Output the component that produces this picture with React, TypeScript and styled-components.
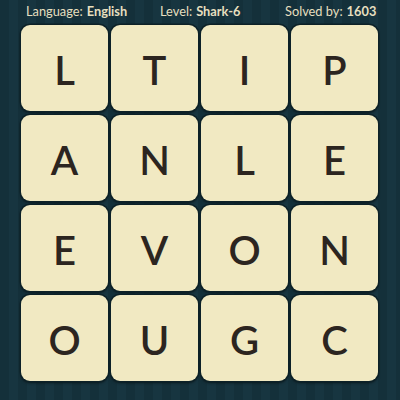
import React from "react";
import styled, { createGlobalStyle } from "styled-components";

const Global = createGlobalStyle`
  html, body { margin: 0; padding: 0; }
  body {
    width: 400px;
    height: 400px;
    overflow: hidden;
    background-color: #14303a;
    background-image: repeating-linear-gradient(
      90deg,
      #14303a 0px,
      #14303a 9px,
      #173540 9px,
      #173540 18px
    );
    font-family: Lato, "Open Sans", sans-serif;
  }
`;

const Page = styled.div`
  width: 400px;
  height: 400px;
  display: flex;
  flex-direction: column;
`;

const Header = styled.div`
  height: 25px;
  display: grid;
  grid-template-columns: 134px 125px 1fr;
  align-items: center;
  padding: 0 28px 3px 26px;
  box-sizing: border-box;
  color: #e6dfbf;
  font-size: 12.8px;
`;

const Info = styled.span<{ $end?: boolean }>`
  white-space: nowrap;
  text-align: ${(p) => (p.$end ? "right" : "left")};
`;

const Value = styled.b`
  font-weight: 700;
  margin-left: 4px;
`;

const Board = styled.div`
  display: grid;
  grid-template-columns: repeat(4, 87px);
  grid-auto-rows: 86px;
  column-gap: 3px;
  row-gap: 4px;
  padding-left: 21px;
`;

const Tile = styled.div`
  background: #f1e9c2;
  border-radius: 9px;
  box-shadow: 0 0 0 1.5px #0d2127, 0 2px 3px rgba(0, 0, 0, 0.5);
  display: flex;
  align-items: center;
  justify-content: center;
  color: #2c2520;
  font-family: Lato, sans-serif;
  font-weight: 600;
  font-size: 40px;
  line-height: 1;
  padding-top: 3px;
  box-sizing: border-box;
`;

const letters = "LTIPANLEEVONOUGC".split("");

export default function App() {
  return (
    <Page>
      <Global />
      <Header>
        <Info>
          Language:<Value>English</Value>
        </Info>
        <Info>
          Level:<Value>Shark-6</Value>
        </Info>
        <Info $end>
          Solved by:<Value>1603</Value>
        </Info>
      </Header>
      <Board>
        {letters.map((l, i) => (
          <Tile key={i}>{l}</Tile>
        ))}
      </Board>
    </Page>
  );
}
